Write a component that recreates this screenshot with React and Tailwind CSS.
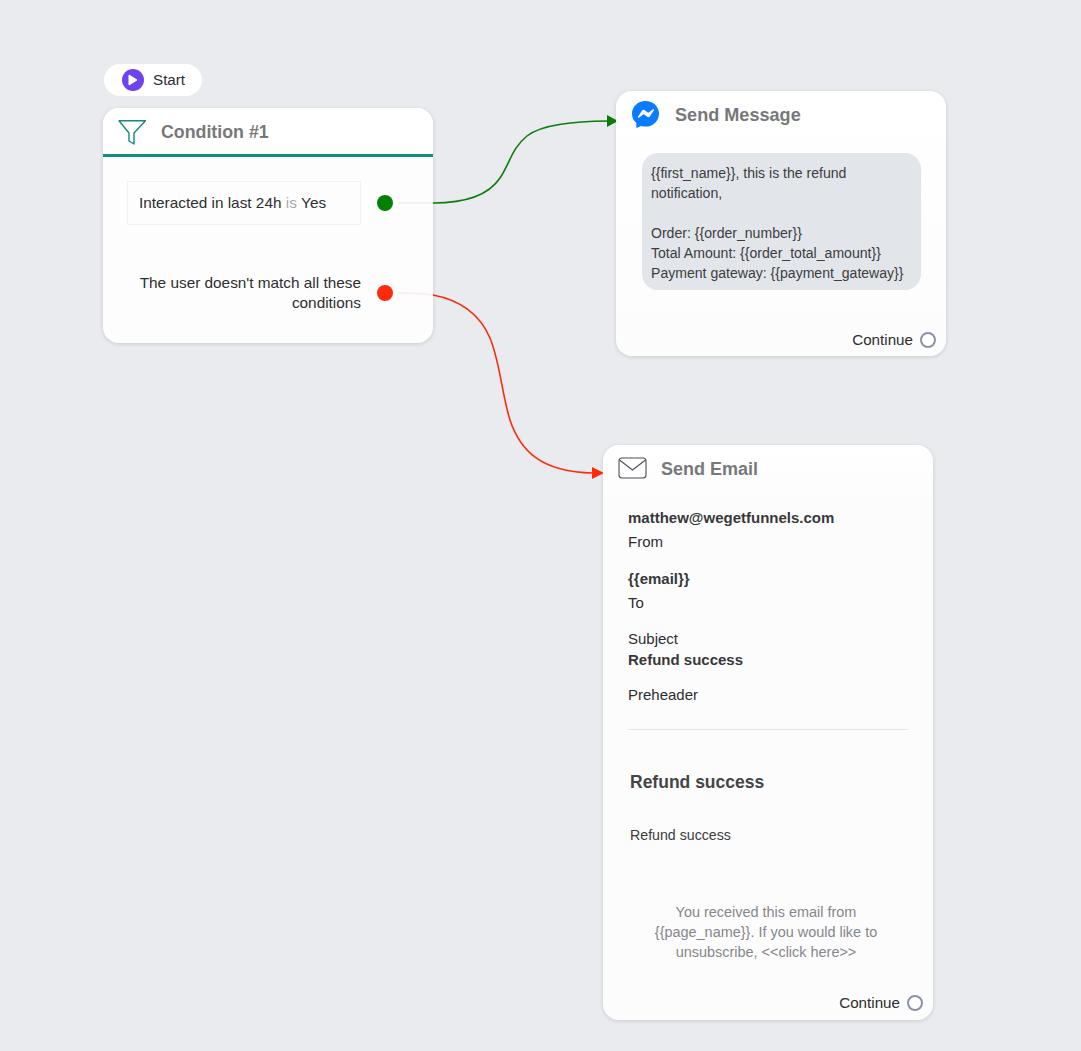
import React from 'react';

function FunnelIcon() {
  return (
    <svg width="29" height="26" viewBox="0 0 29 26" fill="none" stroke="#14897c" strokeWidth="1.4" strokeLinejoin="round">
      <path d="M1 .8H27.500L16 13V24L11 21V13z" />
    </svg>
  );
}

function MessengerIcon() {
  return (
    <svg width="27" height="27" viewBox="0 0 27 27">
      <path fill="#0a7cff" d="M13.500 0C6 0 0 5.500 0 12.700c0 3.700 1.600 7 4.300 9.200v4.300c0 .5 .5 .8 1 .6l3.600-1.800c1.400 .4 3 .6 4.600 .6 7.500 0 13.500-5.600 13.500-12.900S21 0 13.500 0z" />
      <path fill="#fff" d="M6 15.800l3.900-6.100c.6-1 1.900-1.200 2.800-.5l3.100 2.300c.3 .2 .7 .2 1 0l4.200-3.200c.6-.4 1.300 .3 .9 .9l-3.900 6.100c-.6 1-1.900 1.200-2.800 .5l-3.100-2.300c-.3-.2-.7-.2-1 0l-4.200 3.200c-.6 .4-1.300-.3-.9-.9z" />
    </svg>
  );
}

function MailIcon() {
  return (
    <svg width="29" height="22" viewBox="0 0 29 22" fill="none" stroke="#4b4f56" strokeWidth="1.1">
      <rect x="1" y="1" width="27" height="20" rx="3" />
      <path d="M1.500 3l13 10 13-10" />
    </svg>
  );
}

function Connectors() {
  return (
    <svg className="absolute inset-0" width="1081" height="1051" fill="none" strokeWidth="1.600">
      <path d="M398 203H433C470 203 490 193 500 178C510 163 512 148 527 136C542 124 575 121.500 608 121" stroke="#0a7d0a" />
      <path d="M607 115l11 6-11 6z" fill="#0a7d0a" />
      <path d="M398 293C415 293 425 294 433 295C460 300 480 315 490 338C500 362 502 395 510 420C520 450 540 472 593 473" stroke="#fb2b0c" />
      <path d="M592 467l12 6-12 6z" fill="#fb2b0c" />
    </svg>
  );
}

function Continue() {
  return (
    <div className="flex items-center justify-end gap-[7px] text-[15.200px] leading-5 text-[#2e2e30]">
      <span>Continue</span>
      <span className="w-4 h-4 rounded-full border-2 border-[#8b93a7] bg-white"></span>
    </div>
  );
}

export default function App() {
  return (
    <div className="relative w-[1081px] h-[1051px] overflow-hidden bg-[#e9ebef] font-['Liberation_Sans',Arial,sans-serif] text-[15px] text-[#2e2e30]">
      <Connectors />

      <div className="absolute left-[104px] top-[64px] w-[98px] h-8 flex items-center gap-[9px] pl-[18px] rounded-full bg-white">
        <span className="w-[22px] h-[22px] rounded-full bg-[#6d45f0] flex items-center justify-center">
          <svg width="10" height="12" viewBox="0 0 10 12"><path d="M1 1l8 5-8 5z" fill="#fff" stroke="#fff" strokeLinejoin="round" /></svg>
        </span>
        <span className="text-[15.200px] leading-5">Start</span>
      </div>

      {/* condition node */}
      <div className="absolute left-[103px] top-[108px] w-[330px] h-[235px] rounded-2xl bg-white/90 shadow-[0_1px_4px_rgba(0,0,0,0.14)] overflow-hidden">
        <div className="h-[49px] pt-[3px] bg-white border-b-[3px] border-[#128f81] flex items-center pl-[15px]">
          <FunnelIcon />
          <span className="ml-[14px] text-[17.800px] font-bold text-[#77787a]">Condition #1</span>
        </div>
        <div className="flex items-center mt-[24px] pl-6 text-[15.350px]">
          <div className="w-[234px] h-[44px] flex items-center pl-[11px] border border-[#f0f1f3] whitespace-nowrap">
            Interacted in last 24h&nbsp;<span className="text-[#a9abaf]">is</span>&nbsp;Yes
          </div>
          <span className="ml-[16px] w-4 h-4 rounded-full bg-[#047f04]"></span>
        </div>
        <div className="flex items-center mt-[48px] pl-6 text-[15.350px]">
          <div className="w-[234px] text-right leading-5">The user doesn't match all these conditions</div>
          <span className="ml-[16px] w-4 h-4 rounded-full bg-[#fb2b0c]"></span>
        </div>
      </div>

      {/* message node */}
      <div className="absolute left-[616px] top-[91px] w-[330px] h-[265px] rounded-2xl bg-gradient-to-b from-white to-[#fcfcfd] shadow-[0_1px_4px_rgba(0,0,0,0.14)] flex flex-col">
        <div className="h-[46px] flex items-center pl-[16px]">
          <MessengerIcon />
          <span className="ml-[16px] mt-[3px] text-[18.100px] font-bold text-[#77787a]">Send Message</span>
        </div>
        <div className="ml-[26px] mt-[16px] w-[279px] h-[137px] rounded-2xl bg-[#e2e5e9] pl-[9px] pr-[10px] py-[10px] text-[14.070px] leading-5 text-[#3b3d40]">
          {'{{first_name}}, this is the refund notification,'}
          <br /><br />
          {'Order: {{order_number}}'}
          <br />
          {'Total Amount: {{order_total_amount}}'}
          <br />
          {'Payment gateway: {{payment_gateway}}'}
        </div>
        <div className="mt-auto pr-[10px] pb-[6px]"><Continue /></div>
      </div>

      {/* email node */}
      <div className="absolute left-[603px] top-[445px] w-[330px] h-[575px] rounded-2xl bg-gradient-to-b from-white to-[#fcfcfd] to-[10%] shadow-[0_1px_4px_rgba(0,0,0,0.14)] flex flex-col">
        <div className="h-[46px] flex items-center pl-[15px]">
          <MailIcon />
          <span className="ml-[14px] mt-[2px] text-[18px] font-bold text-[#77787a]">Send Email</span>
        </div>
        <div className="px-[25px] pt-[16px] leading-[21px]">
          <div className="font-semibold text-[#38383a]">matthew@wegetfunnels.com</div>
          <div className="mt-[3px]">From</div>
          <div className="mt-[16px] font-semibold text-[#38383a]">{'{{email}}'}</div>
          <div className="mt-[3px]">To</div>
          <div className="mt-[15px]">Subject</div>
          <div className="font-semibold text-[#38383a]">Refund success</div>
          <div className="mt-[14px]">Preheader</div>
          <div className="mt-[24px] w-[280px] border-t border-[#e3e5ea]"></div>
        </div>
        <div className="px-[27px] mt-[40px] text-[17.500px] leading-6 font-bold text-[#444547]">Refund success</div>
        <div className="px-[27px] mt-[31px] text-[14.200px] leading-5 text-[#3b3d40]">Refund success</div>
        <div className="ml-[43px] mt-[57px] w-[240px] text-center text-[14.450px] leading-5 text-[#85878b]">
          {'You received this email from {{page_name}}. If you would like to unsubscribe, <<click here>>'}
        </div>
        <div className="mt-auto pr-[10px] pb-[7px]"><Continue /></div>
      </div>
    </div>
  );
}
